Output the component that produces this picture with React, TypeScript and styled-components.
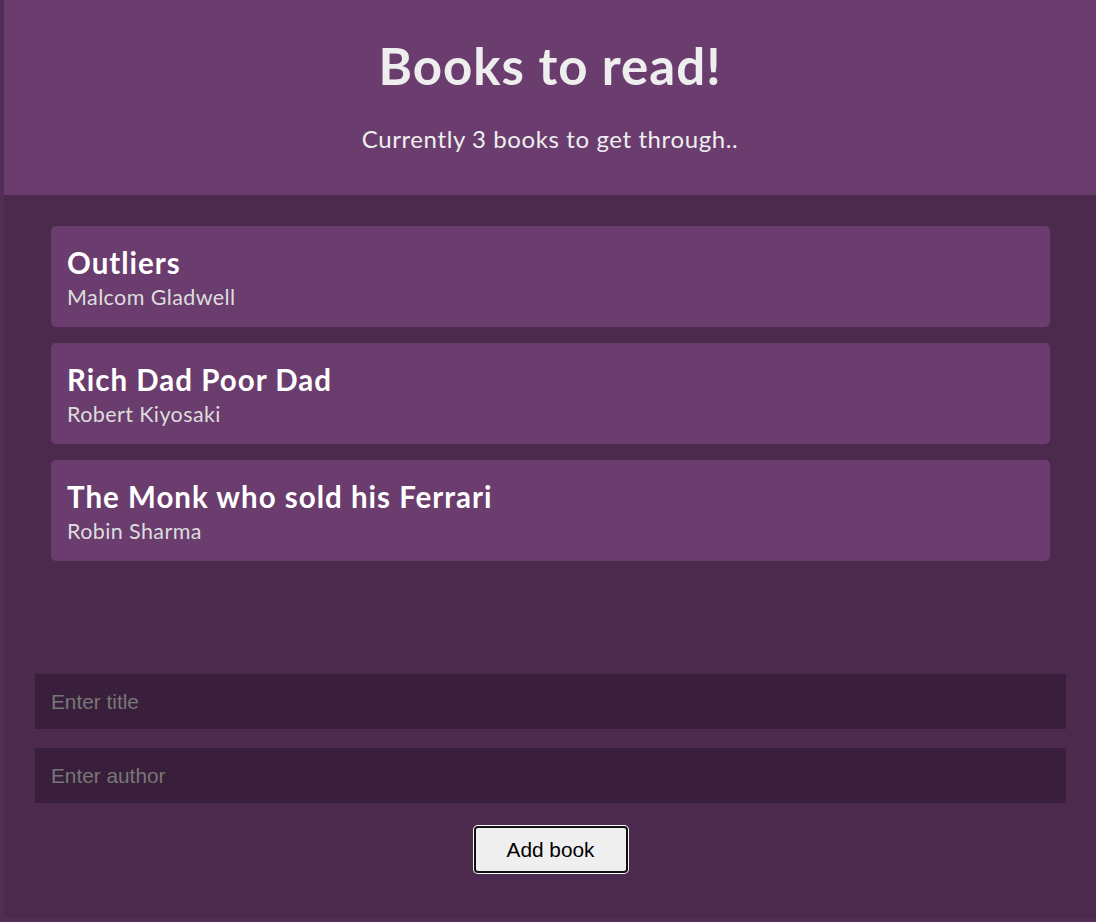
import React, { useState } from "react";
import styled, { createGlobalStyle } from "styled-components";

const GlobalStyle = createGlobalStyle`
	html, body {
		margin: 0;
		padding: 0;
		background-color: #522d55;
		overflow: hidden;
	}
	* {
		box-sizing: border-box;
	}
`;

const Container = styled.div`
	margin: 0 0 4px 4px;
	width: 1092px;
	height: 918px;
	display: flex;
	flex-direction: column;
	background-color: #4c2a4d;
	font-family: Lato, "Noto Sans", sans-serif;
`;

const Header = styled.header`
	height: 195px;
	padding-top: 36px;
	display: flex;
	flex-direction: column;
	align-items: center;
	background-color: #6b3d6e;
	color: #eeeeee;
`;

const Title = styled.h1`
	margin: 0;
	font-size: 51px;
	line-height: 60px;
	font-weight: 700;
	letter-spacing: 1px;
`;

const Subtitle = styled.p`
	margin: 28px 0 0;
	font-size: 24px;
	line-height: 29px;
	letter-spacing: 0.6px;
`;

const BookList = styled.ul`
	list-style: none;
	margin: 0;
	padding: 31px 46px 0 47px;
	display: flex;
	flex-direction: column;
	gap: 16px;
`;

const BookCard = styled.li`
	height: 101px;
	padding: 20px 16px 17px;
	border-radius: 5px;
	background-color: #6b3d6e;
`;

const BookTitle = styled.h3`
	margin: 0;
	font-size: 29.5px;
	line-height: 34px;
	font-weight: 700;
	letter-spacing: 1px;
	color: #ffffff;
`;

const BookAuthor = styled.p`
	margin: 4px 0 0;
	font-size: 21.5px;
	line-height: 26px;
	letter-spacing: 0.4px;
	color: #dddddd;
`;

const Form = styled.form`
	margin-top: 113px;
	padding: 0 30px 0 31px;
	display: flex;
	flex-direction: column;
	gap: 19px;
`;

const Input = styled.input`
	height: 55px;
	padding: 0 16px;
	border: none;
	outline: none;
	background-color: #3a1f3c;
	color: #eeeeee;
	font-family: "Liberation Sans", Arial, sans-serif;
	font-size: 20.8px;

	&::placeholder {
		color: #777777;
	}
`;

const AddButton = styled.button`
	align-self: center;
	margin-top: 4px;
	width: 154px;
	height: 47px;
	border: 2px solid #111111;
	border-radius: 4px;
	box-shadow: 0 0 0 1px #ffffff;
	background-color: #efefef;
	color: #000000;
	font-family: "Liberation Sans", Arial, sans-serif;
	font-size: 20.8px;
	cursor: pointer;
`;

const initialBooks = [
	{ id: 1, title: "Outliers", author: "Malcom Gladwell" },
	{ id: 2, title: "Rich Dad Poor Dad", author: "Robert Kiyosaki" },
	{ id: 3, title: "The Monk who sold his Ferrari", author: "Robin Sharma" },
];

function App() {
	const [books, setBooks] = useState(initialBooks);
	const [title, setTitle] = useState("");
	const [author, setAuthor] = useState("");

	const addBook = (e: React.FormEvent) => {
		e.preventDefault();
		if (!title || !author) return;
		setBooks([...books, { id: Date.now(), title, author }]);
		setTitle("");
		setAuthor("");
	};

	return (
		<>
			<GlobalStyle />
			<Container>
				<Header>
					<Title>Books to read!</Title>
					<Subtitle>Currently {books.length} books to get through..</Subtitle>
				</Header>
				<BookList>
					{books.map((book) => (
						<BookCard key={book.id}>
							<BookTitle>{book.title}</BookTitle>
							<BookAuthor>{book.author}</BookAuthor>
						</BookCard>
					))}
				</BookList>
				<Form onSubmit={addBook}>
					<Input
						type="text"
						placeholder="Enter title"
						value={title}
						onChange={(e) => setTitle(e.target.value)}
					/>
					<Input
						type="text"
						placeholder="Enter author"
						value={author}
						onChange={(e) => setAuthor(e.target.value)}
					/>
					<AddButton type="submit">Add book</AddButton>
				</Form>
			</Container>
		</>
	);
}

export default App;
